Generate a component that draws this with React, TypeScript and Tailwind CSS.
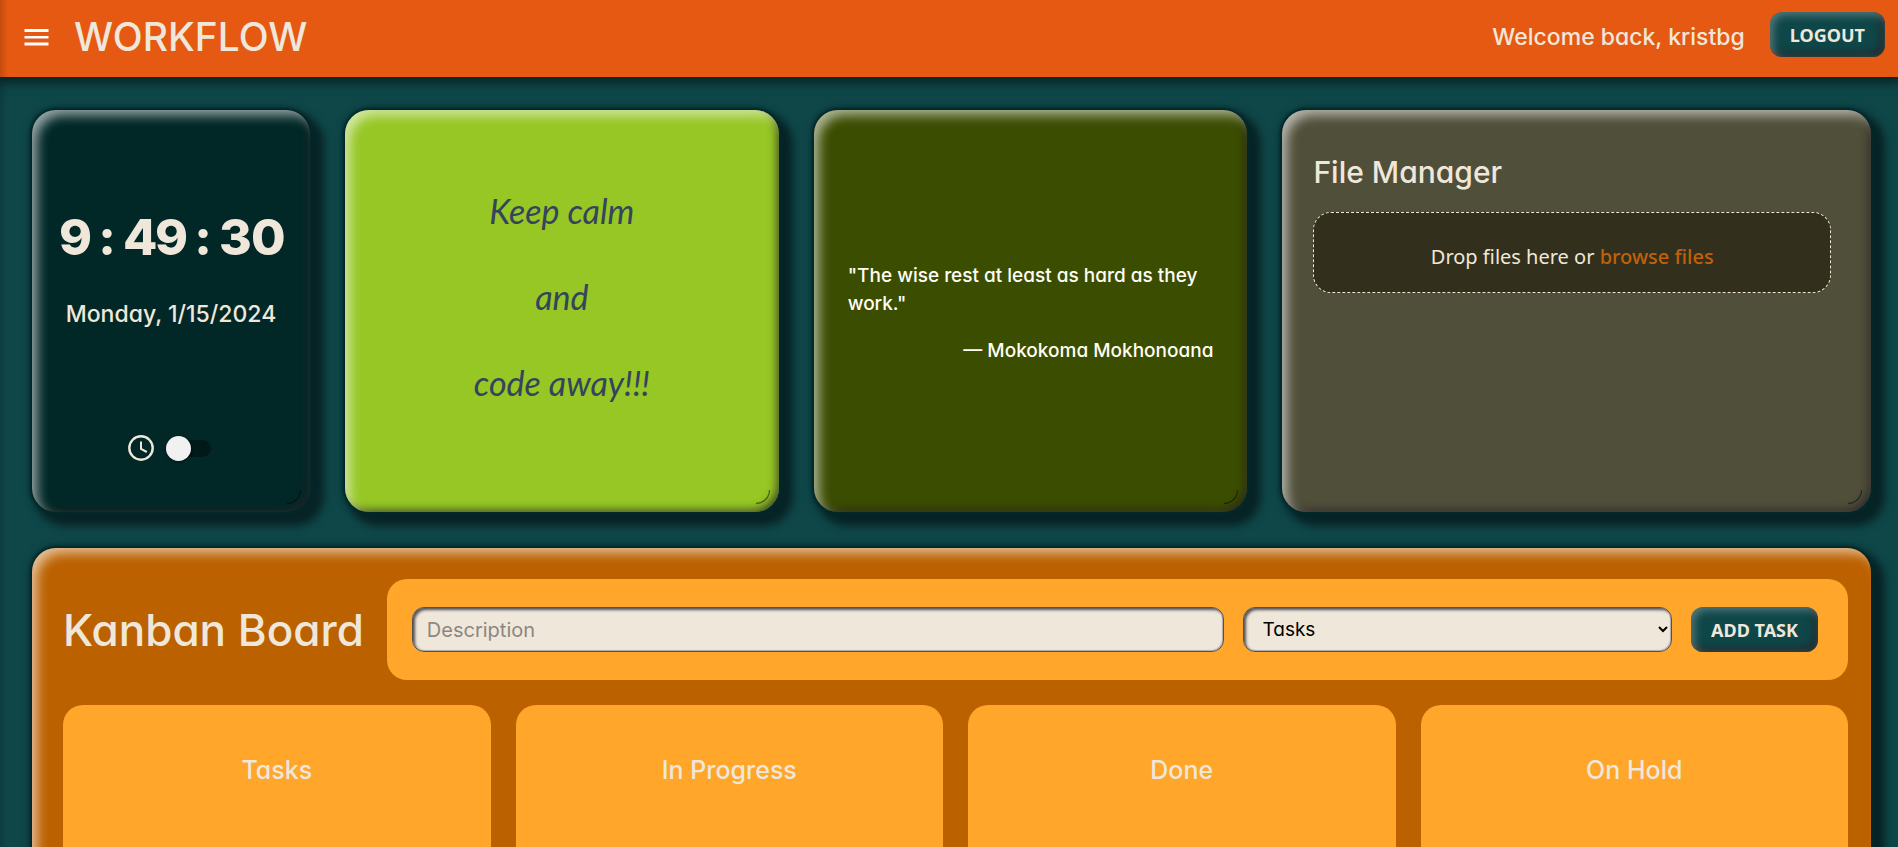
import type { ReactNode } from "react";

const display = "font-[Inter,'Noto_Sans',sans-serif] [font-feature-settings:'cv11']";
const cardShadow =
  "shadow-[inset_7px_7px_12px_-2px_rgba(255,255,255,0.6),inset_-4px_-4px_8px_-2px_rgba(36,32,36,0.75),0_0_2px_2px_#03282a,0_0_8px_1px_#03282a,9px_9px_9px_5px_#082426]";
const boardShadow =
  "shadow-[inset_7px_7px_12px_-2px_rgba(255,255,255,0.6),0_0_2px_2px_#03282a,0_0_8px_1px_#03282a,9px_9px_9px_5px_#082426]";
const buttonStyle =
  "h-[45px] shrink-0 rounded-xl bg-[#0f4749] px-5 font-['Noto_Sans',sans-serif] text-lg font-bold text-[#f0e7db] shadow-[inset_3px_3px_8px_rgba(255,255,255,0.3),inset_-4px_-4px_8px_rgba(38,34,38,0.8)]";
const fieldStyle =
  "h-[45px] min-w-0 rounded-xl border border-[#55504c] bg-[#f0e7db] shadow-[inset_2px_2px_3px_rgba(30,30,40,0.75),inset_-1px_-1px_1px_rgba(90,90,120,0.4)] outline-none";

function Corner() {
  return (
    <svg className="absolute right-[8px] bottom-[7px]" width="16" height="16" viewBox="0 0 16 16" fill="none" aria-hidden="true">
      <path d="M14.500 1A13.500 13.500 0 0 1 1 14.500" stroke="#000" strokeOpacity="0.45" strokeWidth="1.300" />
    </svg>
  );
}

function Card({ className, children }: { className: string; children: ReactNode }) {
  return (
    <section className={`relative rounded-3xl ${cardShadow} ${className}`}>
      {children}
      <Corner />
    </section>
  );
}

export default function App() {
  const columns = ["Tasks", "In Progress", "Done", "On Hold"];
  const time = "9:49:30";
  return (
    <div className={`relative flex h-screen flex-col overflow-hidden bg-[#0f4749] text-[#f0e7db] ${display}`}>
      <header className="relative flex h-[77px] shrink-0 items-center justify-between bg-[#e65913] pr-[13px] pb-1 pl-6 shadow-[0_3px_10px_3px_#082426]">
        <div className="flex items-center gap-[25px]">
          <button type="button" aria-label="Open menu">
            <svg width="25" height="18" viewBox="0 0 25 18" fill="#fff" aria-hidden="true">
              <path d="M0.500 1h24v3h-24zM0.500 8h24v2.600h-24zM0.500 14.500h24v3h-24z" />
            </svg>
          </button>
          <h1 className="text-[39px] leading-none font-medium">WORKFLOW</h1>
        </div>
        <div className="flex items-center gap-[25px] pb-1">
          <p className="pt-1 text-[23px] leading-9 font-medium">Welcome back, kristbg</p>
          <button type="button" className={buttonStyle}>LOGOUT</button>
        </div>
      </header>

      <main className="flex flex-col gap-9 pt-[33px] pr-[27px] pl-8">
        <div className="grid h-[402px] grid-cols-[278px_434fr_434fr_589fr] gap-[35px]">
          <Card className="flex flex-col items-center bg-[#012827] pt-[102px]">
            <time className="text-[50px] leading-[50px] font-extrabold">
              {time.split("").map((char, i) => (
                <span key={i} className="inline-block w-8 text-center">{char}</span>
              ))}
            </time>
            <p className="mt-9 text-[23px] leading-8 font-medium">Monday, 1/15/2024</p>
            <div className="mt-[105px] flex items-center gap-3 pr-1">
              <svg width="26" height="26" viewBox="0 0 26 26" fill="none" stroke="#f0e7db" strokeWidth="2.400" aria-hidden="true">
                <circle cx="13" cy="13" r="11.700" />
                <path d="M13 6.500V14l5.800 3" strokeWidth="2" />
              </svg>
              <input
                type="checkbox"
                role="switch"
                aria-label="Toggle time format"
                className="relative my-1 h-[17px] w-[45px] appearance-none rounded-full bg-[#011918] before:absolute before:-top-1 before:left-0 before:size-[25px] before:rounded-full before:bg-[#f1f1f1] before:shadow-[0_1px_3px_rgba(0,0,0,0.5)] before:content-['']"
              />
            </div>
          </Card>

          <Card className="flex flex-col items-center justify-center bg-[#96c724] pb-7 text-center font-[Lato,sans-serif] text-[34px] leading-[86px] text-[#34435e] italic">
            <p>Keep calm</p>
            <p>and</p>
            <p>code away!!!</p>
          </Card>

          <Card className="flex flex-col justify-center bg-[#3b4d00] px-[34px] pt-1 text-[19px] leading-7 font-medium text-[#fffdf5]">
            <blockquote>"The wise rest at least as hard as they work."</blockquote>
            <p className="mt-[19px] text-right">— Mokokoma Mokhonoana</p>
          </Card>

          <Card className="bg-[#504f3a] px-[31px] pt-[42px] pr-10">
            <h2 className="text-[30px] leading-10 font-medium">File Manager</h2>
            <div className="mt-5 flex h-[81px] items-center justify-center rounded-[18px] border border-dashed border-[#f0e7db] bg-[#32301c] pt-2 font-['Noto_Sans',sans-serif] text-xl">
              <p>
                Drop files here or{" "}
                <a href="#browse" className="font-medium text-[#c2600a]">browse files</a>
              </p>
            </div>
          </Card>
        </div>

        <section className={`rounded-3xl ${boardShadow} bg-[#bc6100] pt-[31px] pr-[23px] pb-8 pl-[31px]`}>
          <div className="flex items-center gap-[23px]">
            <h2 className="text-[44px] leading-none font-medium">Kanban Board</h2>
            <form className="flex h-[101px] flex-1 items-center gap-[19px] rounded-[20px] bg-[#ffa62b] pr-[30px] pl-[25px]" onSubmit={(e) => e.preventDefault()}>
              <input aria-label="Description" placeholder="Description" className={`${fieldStyle} flex-[810] px-3.5 text-xl placeholder:text-[#8c8682]`} />
              <select aria-label="Column" className={`${fieldStyle} flex-[427] pl-3.5 text-[19px] text-black`}>
                {columns.map((name) => (
                  <option key={name}>{name}</option>
                ))}
              </select>
              <button type="submit" className={buttonStyle}>ADD TASK</button>
            </form>
          </div>
          <div className="mt-[25px] grid grid-cols-4 gap-[25px]">
            {columns.map((name) => (
              <section key={name} className="min-h-[320px] rounded-[20px] bg-[#ffa62b] pt-[47px] text-center">
                <h3 className="text-[25px] leading-9 font-medium">{name}</h3>
              </section>
            ))}
          </div>
        </section>
      </main>
      <div className="pointer-events-none absolute inset-y-0 left-0 w-2 bg-linear-to-r from-black/15 to-transparent" />
    </div>
  );
}
